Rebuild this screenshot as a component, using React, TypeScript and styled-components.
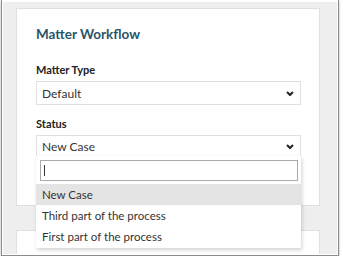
import styled, { createGlobalStyle } from "styled-components";

const GlobalStyle = createGlobalStyle`
  html, body {
    margin: 0;
    padding: 0;
    background: #ffffff;
  }
  body {
    font-family: Lato, "Open Sans", "Liberation Sans", sans-serif;
    color: #333333;
  }
`;

const Frame = styled.div`
  box-sizing: border-box;
  width: 338px;
  height: 256px;
  margin-left: 1px;
  padding: 2px 1px 1px 1px;
  border: 1px solid #8c8c8c;
  border-top: none;
  background: #ffffff;
  box-shadow: 0 1px 2px rgba(0, 0, 0, 0.35);
  overflow: hidden;
`;

const Canvas = styled.div`
  box-sizing: border-box;
  height: 100%;
  background: #eeeeee;
  padding: 6px 17px 0 13px;
  display: flex;
  flex-direction: column;
  gap: 24px;
  overflow: hidden;
`;

const Card = styled.div<{ $tall?: boolean }>`
  box-sizing: border-box;
  background: #ffffff;
  border: 1px solid #e0e0e0;
  padding: 17px 18px 48px 19px;
  min-height: ${(p) => (p.$tall ? "60px" : "0")};
  flex-shrink: 0;
`;

const Title = styled.h2`
  margin: 0 0 20px;
  font-size: 13.5px;
  line-height: 17px;
  font-weight: 700;
  color: #2b5467;
`;

const Label = styled.div<{ $gap?: number }>`
  margin-top: ${(p) => p.$gap ?? 0}px;
  margin-bottom: 4px;
  font-size: 11px;
  line-height: 14px;
  font-weight: 700;
  color: #222222;
`;

const SelectBox = styled.div<{ $open?: boolean }>`
  position: relative;
  box-sizing: border-box;
  height: ${(p) => (p.$open ? "22px" : "24px")};
  border: 1px solid #e0e0e0;
  border-bottom-color: ${(p) => (p.$open ? "transparent" : "#e0e0e0")};
  padding: 0 6px 0 5px;
  display: flex;
  align-items: center;
  justify-content: space-between;
  font-size: 12px;
  color: #333333;
  background: #ffffff;
`;

const Chevron = () => (
  <svg width="8" height="5" viewBox="0 0 8 5">
    <path d="M1 1 L4 4 L7 1" fill="none" stroke="#222" strokeWidth="2" />
  </svg>
);

const Dropdown = styled.div`
  position: absolute;
  left: -1px;
  right: -1px;
  top: 20px;
  box-sizing: border-box;
  background: #ffffff;
  padding: 4px 3px 1px 4px;
  box-shadow: 1px 2px 4px rgba(0, 0, 0, 0.18);
  z-index: 2;
`;

const Search = styled.div`
  box-sizing: border-box;
  height: 21px;
  border: 1px solid #aaaaaa;
  padding-left: 3px;
  display: flex;
  align-items: center;
  margin-bottom: 3px;
`;

const Caret = styled.span`
  width: 1px;
  height: 11px;
  background: #333333;
`;

const Option = styled.div<{ $active?: boolean }>`
  height: 21px;
  margin: 0 -3px 0 -4px;
  padding-left: 6px;
  display: flex;
  align-items: center;
  font-size: 11.5px;
  color: #333333;
  background: ${(p) => (p.$active ? "#e4e4e4" : "transparent")};
`;

const options = ["New Case", "Third part of the process", "First part of the process"];

export default function App() {
  return (
    <>
      <GlobalStyle />
      <Frame>
        <Canvas>
          <Card>
            <Title>Matter Workflow</Title>
            <Label>Matter Type</Label>
            <SelectBox>
              <span>Default</span>
              <Chevron />
            </SelectBox>
            <Label $gap={12}>Status</Label>
            <SelectBox $open>
              <span>New Case</span>
              <Chevron />
              <Dropdown>
                <Search>
                  <Caret />
                </Search>
                {options.map((o, i) => (
                  <Option key={o} $active={i === 0}>
                    {o}
                  </Option>
                ))}
              </Dropdown>
            </SelectBox>
          </Card>
          <Card $tall />
        </Canvas>
      </Frame>
    </>
  );
}
